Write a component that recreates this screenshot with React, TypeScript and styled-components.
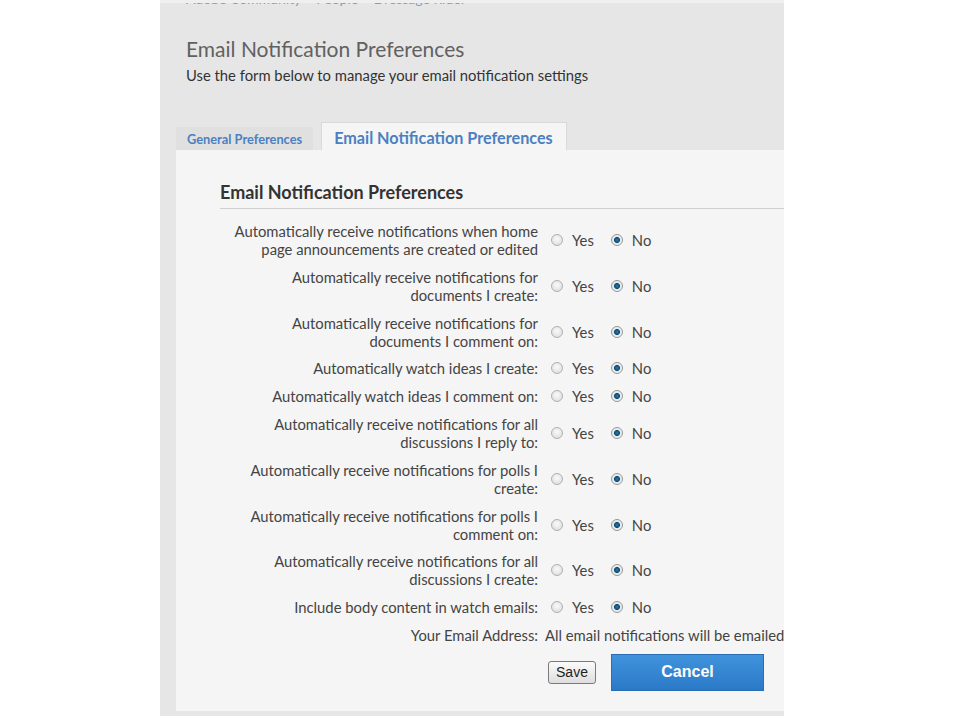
import React from 'react'
import styled, { createGlobalStyle } from 'styled-components'

const Global = createGlobalStyle`
  html, body {
    margin: 0;
    padding: 0;
    background: #ffffff;
  }
  body {
    font-family: Lato, 'Open Sans', sans-serif;
  }
`

const Page = styled.div`
  width: 960px;
  height: 720px;
  padding-left: 160px;
  box-sizing: border-box;
  overflow: hidden;
`

const Panel = styled.div`
  width: 624px;
  height: 716px;
  background: #e6e6e6;
  border-top: 3px solid #efefef;
  padding-bottom: 5px;
  box-sizing: border-box;
  overflow: hidden;
  display: flex;
  flex-direction: column;
`

const Header = styled.div`
  padding-left: 26px;
`

const Breadcrumb = styled.div`
  margin-top: -13px;
  font-size: 14px;
  line-height: 18px;
  color: #7a9fd0;
  white-space: nowrap;
`

const Title = styled.h1`
  margin: 28px 0 0;
  font-size: 21px;
  line-height: 26px;
  font-weight: 400;
  color: #616161;
`

const Subtitle = styled.p`
  margin: 4px 0 0;
  font-size: 14.8px;
  line-height: 18px;
  color: #333333;
`

const TabBar = styled.div`
  margin-top: 38px;
  padding-left: 16px;
  display: flex;
  align-items: flex-end;
  gap: 8px;
  height: 28px;
`

const Tab = styled.div<{ $active?: boolean }>`
  box-sizing: border-box;
  display: flex;
  align-items: center;
  color: #4b80c0;
  white-space: nowrap;
  font-weight: 700;
  ${({ $active }) =>
    $active
      ? `
    height: 28px;
    padding: 2px 13px 0 12px;
    font-size: 16.2px;
    background: #f5f5f5;
    border: 1px solid #d9d9d9;
    border-bottom: none;
  `
      : `
    height: 23px;
    padding: 0 11px;
    font-size: 12.8px;
    background: #e0e0e0;
  `}
`

const Content = styled.div`
  margin-left: 16px;
  width: 720px;
  flex: 1;
  background: #f5f5f5;
  padding: 32px 0 0 44px;
  box-sizing: border-box;
`

const SectionHeading = styled.h2`
  margin: 0 0 8px;
  padding-bottom: 5px;
  font-size: 18px;
  line-height: 21px;
  font-weight: 700;
  color: #333333;
  border-bottom: 1px solid #cfcfcf;
`

const Form = styled.div`
  display: flex;
  flex-direction: column;
`

const Row = styled.div`
  display: grid;
  grid-template-columns: 318px 1fr;
  column-gap: 7px;
  align-items: center;
  padding: 5px 0 4.8px;
`

const Label = styled.div`
  text-align: right;
  font-size: 14.8px;
  line-height: 18px;
  color: #444444;
`

const Field = styled.div`
  display: flex;
  align-items: center;
  white-space: nowrap;
  font-size: 14.8px;
  line-height: 18px;
  color: #444444;
`

const Choices = styled.div`
  display: flex;
  align-items: center;
  padding-left: 6px;
  gap: 17px;
`

const Choice = styled.label`
  display: flex;
  align-items: center;
  gap: 9px;
  font-size: 14.8px;
  color: #444444;
`

const Radio = styled.input`
  appearance: none;
  margin: 0;
  width: 12px;
  height: 12px;
  border-radius: 50%;
  border: 1px solid #b0b0b0;
  box-sizing: border-box;
  background: radial-gradient(circle at 50% 40%, #fafafa 0, #e0e0e0 6px);

  &:checked {
    border-color: #959595;
    background: radial-gradient(
      circle,
      #2a7aa8 0,
      #124c72 2.6px,
      #dde8ee 3.4px,
      #f2f2f2 5px
    );
  }
`

const Buttons = styled.div`
  display: flex;
  align-items: center;
  gap: 15px;
  padding-left: 3px;
`

const SaveButton = styled.button`
  width: 48px;
  height: 23px;
  padding: 0;
  font-family: 'Liberation Sans', Arial, sans-serif;
  font-size: 14px;
  color: #222222;
  border: 1px solid #7a7a7a;
  border-radius: 3px;
  background: linear-gradient(#fbfbfb, #dedede);
`

const CancelButton = styled.button`
  width: 153px;
  height: 37px;
  padding: 0;
  font-family: 'Liberation Sans', Arial, sans-serif;
  font-size: 16px;
  font-weight: 700;
  color: #ffffff;
  border: 1px solid #2a6db3;
  border-radius: 0;
  background: linear-gradient(#4193dc, #2a79c8);
`

const prefs = [
  'Automatically receive notifications when home page announcements are created or edited',
  'Automatically receive notifications for documents I create:',
  'Automatically receive notifications for documents I comment on:',
  'Automatically watch ideas I create:',
  'Automatically watch ideas I comment on:',
  'Automatically receive notifications for all discussions I reply to:',
  'Automatically receive notifications for polls I create:',
  'Automatically receive notifications for polls I comment on:',
  'Automatically receive notifications for all discussions I create:',
  'Include body content in watch emails:',
]

export default function App() {
  return (
    <Page>
      <Global />
      <Panel>
        <Header>
          <Breadcrumb>Adobe Community &gt; People &gt; Dressage Rider</Breadcrumb>
          <Title>Email Notification Preferences</Title>
          <Subtitle>Use the form below to manage your email notification settings</Subtitle>
        </Header>
        <TabBar>
          <Tab>General Preferences</Tab>
          <Tab $active>Email Notification Preferences</Tab>
        </TabBar>
        <Content>
          <SectionHeading>Email Notification Preferences</SectionHeading>
          <Form>
            {prefs.map((text, i) => (
              <Row key={i}>
                <Label>{text}</Label>
                <Choices>
                  <Choice>
                    <Radio type='radio' name={`pref-${i}`} readOnly />
                    Yes
                  </Choice>
                  <Choice>
                    <Radio type='radio' name={`pref-${i}`} defaultChecked />
                    No
                  </Choice>
                </Choices>
              </Row>
            ))}
            <Row>
              <Label>Your Email Address:</Label>
              <Field>All email notifications will be emailed</Field>
            </Row>
            <Row>
              <Label />
              <Buttons>
                <SaveButton>Save</SaveButton>
                <CancelButton>Cancel</CancelButton>
              </Buttons>
            </Row>
          </Form>
        </Content>
      </Panel>
    </Page>
  )
}
